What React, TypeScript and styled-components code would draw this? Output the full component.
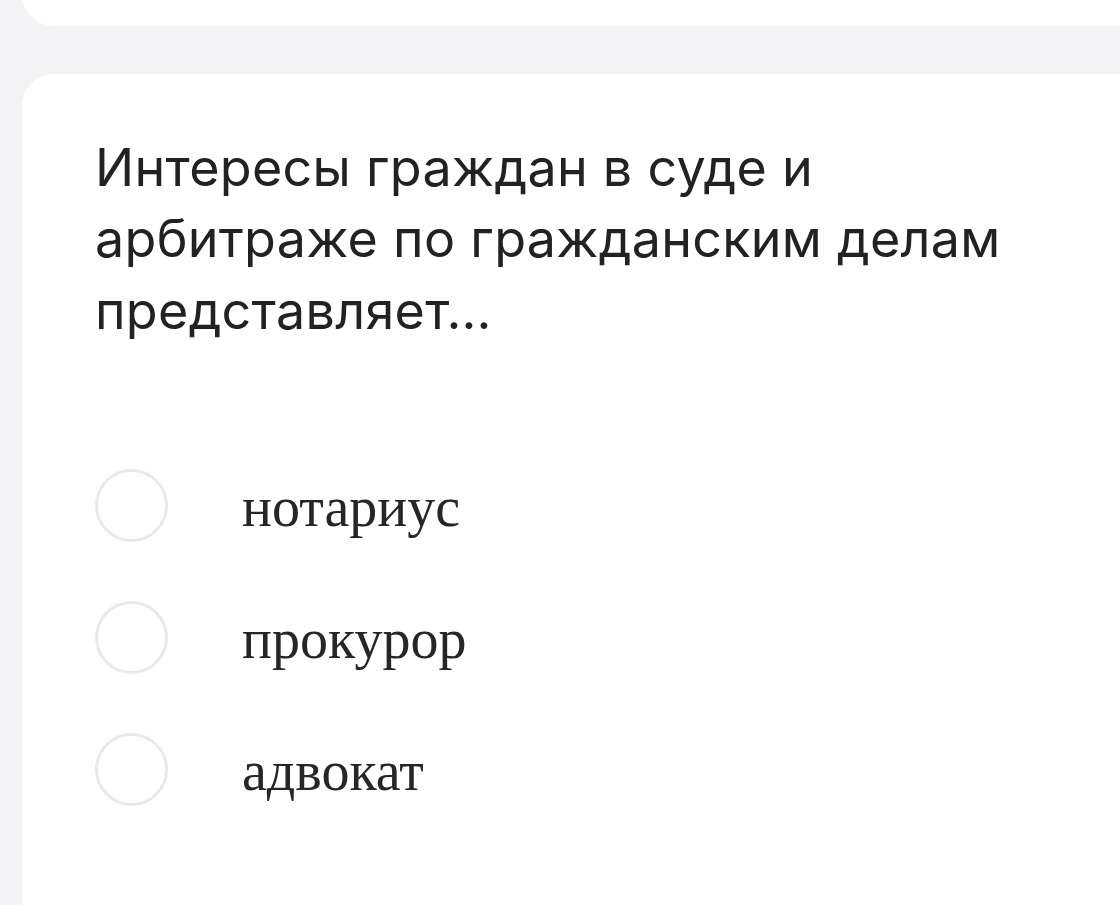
import styled, { createGlobalStyle } from "styled-components";

const GlobalStyle = createGlobalStyle`
    html, body {
        margin: 0;
        padding: 0;
        background: #f3f3f5;
        overflow: hidden;
    }
`

const options = ["нотариус", "прокурор", "адвокат"];

const App = () => {
    return (
        <>
            <GlobalStyle />
            <StyledPage>
                <StyledTopCard />
                <StyledQuestionCard>
                    <StyledQuestion>
                        Интересы граждан в суде и арбитраже по гражданским делам представляет…
                    </StyledQuestion>
                    <StyledOptions>
                        {options.map((o) => (
                            <StyledOption key={o}>
                                <StyledRadio />
                                <StyledOptionText>{o}</StyledOptionText>
                            </StyledOption>
                        ))}
                    </StyledOptions>
                </StyledQuestionCard>
            </StyledPage>
        </>
    )
}

const StyledPage = styled.div`
    display: flex;
    flex-direction: column;
    gap: 48px;
    padding-left: 22px;
    height: 905px;
    overflow: hidden;
`

const StyledTopCard = styled.div`
    height: 80px;
    margin-top: -54px;
    margin-right: -60px;
    background: #fff;
    border-radius: 32px;
    flex-shrink: 0;
`

const StyledQuestionCard = styled.div`
    background: #fff;
    border-radius: 32px;
    margin-right: -60px;
    padding: 58px 0 0 73px;
    min-height: 1000px;
    flex-shrink: 0;
`

const StyledQuestion = styled.div`
    font-family: Inter, "Noto Sans", sans-serif;
    font-size: 52px;
    letter-spacing: 0.3px;
    line-height: 71.4px;
    color: #222;
    width: 940px;
`

const StyledOptions = styled.div`
    display: flex;
    flex-direction: column;
    gap: 59px;
    margin-top: 123px;
`

const StyledOption = styled.div`
    display: flex;
    align-items: center;
    gap: 74px;
    height: 73px;
`

const StyledRadio = styled.div`
    width: 73px;
    height: 73px;
    box-sizing: border-box;
    border: 3px solid #e9e9e9;
    border-radius: 50%;
    flex-shrink: 0;
`

const StyledOptionText = styled.div`
    font-family: "Liberation Serif", "DejaVu Serif", serif;
    font-size: 56px;
    color: #262626;
    line-height: 1;
    padding-top: 2px;
`

export default App
